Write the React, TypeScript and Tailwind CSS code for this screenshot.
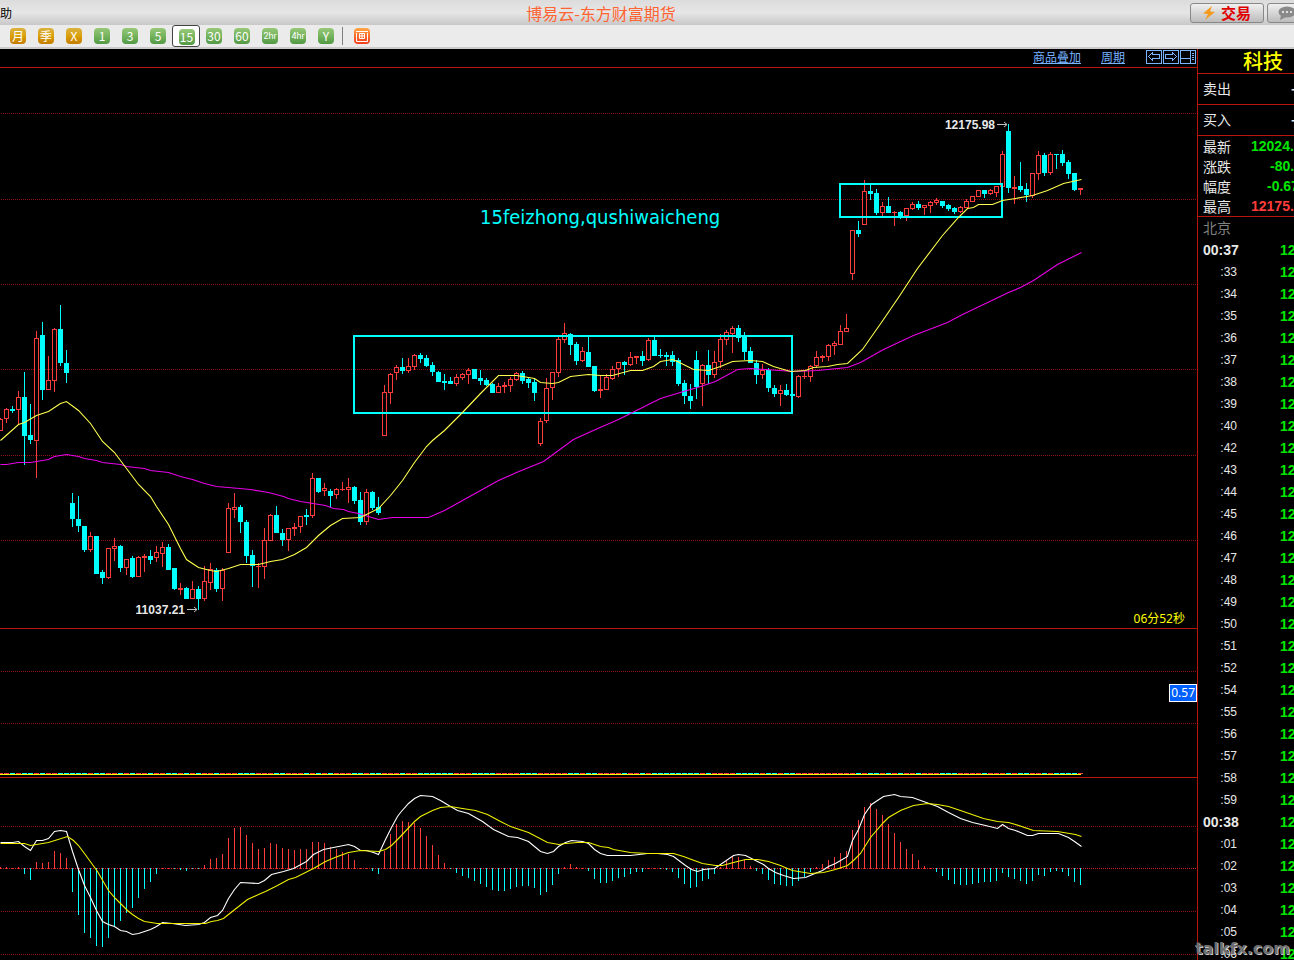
import type { ReactNode } from "react";

// direction (1 = up, 0 = down), high, body top, body bottom, low
type Candle = [number, number, number, number, number];
type Point = [number, number];

const STEP = 6;

const candles: Candle[] = [
  [1, 418, 419, 431, 431], [1, 408, 409, 419, 423], [0, 406, 409, 411, 413], [1, 391, 397, 410, 424],
  [0, 372, 397, 436, 465], [0, 404, 435, 440, 444], [1, 331, 338, 441, 478], [0, 322, 335, 390, 400],
  [1, 356, 380, 390, 390], [1, 328, 329, 381, 392], [0, 305, 329, 363, 366], [0, 350, 363, 373, 383],
  [0, 493, 503, 519, 527], [0, 496, 519, 526, 532], [0, 526, 526, 550, 552], [1, 532, 536, 550, 552],
  [0, 536, 536, 574, 574], [0, 570, 572, 578, 584], [1, 548, 548, 578, 579], [1, 538, 546, 549, 561],
  [0, 545, 546, 568, 572], [1, 559, 559, 568, 575], [0, 556, 558, 577, 578], [1, 556, 557, 577, 577],
  [1, 554, 556, 558, 572], [0, 550, 556, 560, 564], [1, 546, 552, 558, 562], [1, 542, 547, 554, 567],
  [0, 544, 547, 570, 570], [0, 568, 568, 589, 590], [1, 583, 588, 590, 595], [0, 587, 588, 599, 599],
  [1, 581, 589, 599, 599], [0, 586, 589, 599, 610], [1, 566, 581, 599, 601], [1, 563, 569, 583, 590],
  [0, 568, 570, 589, 592], [1, 568, 570, 589, 601], [1, 503, 508, 553, 553], [1, 493, 507, 510, 518],
  [0, 505, 507, 522, 533], [0, 520, 522, 556, 563], [0, 550, 555, 566, 587], [1, 563, 566, 567, 588],
  [1, 528, 540, 567, 579], [1, 514, 515, 541, 541], [0, 506, 515, 533, 533], [0, 529, 533, 540, 546],
  [1, 528, 528, 540, 551], [1, 523, 527, 529, 536], [1, 516, 516, 527, 533], [0, 509, 515, 517, 525],
  [1, 473, 478, 516, 518], [0, 478, 478, 492, 493], [1, 483, 488, 491, 496], [0, 489, 491, 496, 507],
  [1, 488, 489, 495, 499], [1, 482, 489, 490, 491], [1, 478, 487, 490, 503], [0, 486, 487, 501, 504],
  [0, 492, 500, 522, 525], [1, 489, 492, 522, 525], [0, 491, 492, 508, 510], [0, 497, 507, 513, 515],
  [1, 385, 392, 436, 436], [1, 373, 374, 393, 404], [1, 365, 367, 373, 380], [0, 358, 367, 371, 374],
  [1, 358, 366, 371, 373], [1, 354, 355, 367, 370], [0, 353, 355, 359, 363], [0, 355, 358, 366, 367],
  [0, 362, 365, 372, 376], [0, 371, 372, 382, 382], [0, 374, 381, 383, 390], [0, 377, 381, 384, 384],
  [1, 374, 377, 384, 386], [1, 373, 374, 378, 380], [1, 368, 370, 375, 384], [0, 369, 369, 379, 379],
  [0, 370, 378, 381, 385], [0, 378, 380, 385, 386], [0, 383, 384, 393, 393], [1, 383, 386, 393, 393],
  [1, 382, 385, 387, 393], [1, 377, 379, 386, 392], [1, 372, 373, 380, 381], [0, 371, 373, 381, 384],
  [0, 377, 379, 383, 388], [0, 379, 382, 393, 401], [1, 418, 421, 444, 446], [1, 378, 388, 421, 423],
  [1, 372, 372, 388, 400], [1, 337, 339, 373, 377], [1, 323, 333, 340, 343], [0, 333, 334, 345, 355],
  [0, 342, 344, 361, 365], [1, 347, 351, 361, 362], [0, 337, 352, 367, 367], [0, 366, 366, 391, 392],
  [1, 375, 389, 391, 398], [1, 374, 377, 390, 390], [1, 366, 369, 379, 380], [1, 362, 362, 369, 377],
  [0, 361, 362, 365, 375], [1, 352, 357, 365, 366], [1, 356, 356, 358, 364], [0, 351, 356, 361, 366],
  [1, 338, 340, 360, 361], [0, 337, 340, 356, 356], [0, 349, 355, 356, 358], [0, 352, 355, 357, 366],
  [0, 351, 355, 362, 366], [0, 358, 360, 384, 386], [0, 380, 383, 396, 404], [0, 384, 396, 401, 409],
  [0, 351, 360, 387, 399], [1, 364, 365, 384, 406], [0, 350, 365, 375, 384], [1, 351, 362, 375, 378],
  [1, 334, 339, 362, 368], [1, 330, 332, 340, 345], [1, 326, 328, 334, 353], [0, 325, 328, 338, 342],
  [0, 332, 337, 352, 360], [0, 347, 351, 363, 363], [0, 360, 363, 375, 384], [1, 364, 370, 375, 379],
  [0, 368, 370, 388, 392], [0, 385, 388, 394, 397], [1, 385, 390, 394, 406], [0, 384, 390, 395, 396],
  [0, 385, 394, 396, 402], [1, 375, 376, 397, 398], [1, 371, 376, 377, 379], [1, 365, 366, 377, 382],
  [1, 351, 357, 366, 368], [1, 355, 356, 358, 362], [1, 344, 345, 357, 361], [1, 341, 343, 346, 355],
  [1, 325, 331, 345, 345], [1, 314, 328, 332, 332], [1, 230, 230, 274, 280], [0, 221, 230, 234, 237],
  [1, 180, 191, 225, 225], [0, 184, 191, 194, 200], [0, 189, 193, 213, 215], [1, 202, 206, 213, 218],
  [0, 197, 206, 213, 213], [1, 211, 212, 213, 226], [0, 211, 212, 216, 219], [1, 208, 208, 216, 221],
  [1, 202, 204, 209, 210], [0, 201, 204, 208, 210], [1, 205, 205, 208, 215], [1, 201, 202, 206, 213],
  [1, 198, 200, 203, 205], [0, 201, 201, 206, 208], [0, 204, 205, 209, 211], [0, 207, 208, 212, 214],
  [1, 206, 207, 212, 213], [1, 199, 201, 208, 208], [1, 196, 196, 202, 202], [1, 190, 190, 197, 197],
  [0, 190, 190, 194, 198], [1, 189, 190, 194, 195], [1, 186, 186, 193, 197], [1, 151, 154, 187, 189],
  [0, 124, 131, 188, 193], [1, 176, 187, 189, 204], [0, 162, 186, 190, 192], [0, 183, 189, 195, 202],
  [1, 173, 173, 196, 198], [1, 151, 155, 174, 180], [0, 153, 155, 173, 176], [1, 152, 154, 173, 175],
  [0, 154, 154, 155, 169], [0, 150, 154, 163, 166], [0, 160, 162, 174, 179], [0, 173, 173, 190, 191],
  [1, 188, 188, 190, 195],
];

const maFast: Point[] = [
  [0, 440], [18, 424], [24, 422], [36, 415], [48, 411], [60, 403], [66, 401], [78, 410], [90, 423],
  [102, 441], [114, 452], [126, 468], [138, 484], [150, 496], [156, 506], [168, 524], [180, 548],
  [186, 559], [198, 567], [210, 570], [216, 571], [228, 568], [240, 564], [258, 564], [270, 561],
  [282, 559], [294, 554], [306, 547], [318, 535], [330, 525], [342, 518], [360, 517], [372, 511],
  [378, 508], [390, 495], [402, 480], [414, 462], [426, 446], [432, 440], [444, 430], [462, 412],
  [480, 393], [498, 375], [516, 375], [534, 378], [540, 382], [552, 383], [558, 382], [570, 376],
  [588, 374], [600, 375], [612, 375], [630, 370], [642, 370], [653, 366], [660, 361], [672, 359],
  [677, 361], [683, 364], [693, 369], [708, 370], [720, 366], [732, 361], [750, 360], [762, 361],
  [773, 366], [790, 371], [805, 370], [813, 367], [827, 366], [837, 364], [847, 363], [862, 349],
  [883, 319], [900, 294], [917, 268], [942, 235], [958, 217], [967, 208], [973, 207], [978, 204],
  [992, 204], [1002, 200], [1015, 198], [1032, 195], [1047, 190], [1063, 183], [1081, 179],
];

const maSlow: Point[] = [
  [0, 464], [6, 464], [18, 462], [30, 462], [48, 459], [54, 456], [66, 454], [78, 456], [84, 458],
  [96, 460], [102, 462], [120, 464], [126, 466], [144, 468], [150, 470], [168, 472], [180, 476],
  [192, 479], [204, 483], [216, 486], [228, 487], [250, 489], [268, 492], [283, 496], [288, 498],
  [300, 501], [325, 505], [333, 508], [343, 509], [348, 511], [358, 513], [378, 519], [392, 517],
  [428, 517], [444, 510], [462, 500], [480, 490], [498, 480], [516, 472], [543, 461], [573, 439],
  [595, 429], [618, 419], [660, 398], [683, 391], [697, 387], [715, 381], [737, 369], [750, 368],
  [793, 371], [817, 370], [837, 368], [847, 367], [860, 362], [883, 349], [913, 335], [947, 322],
  [960, 315], [1008, 292], [1020, 287], [1033, 280], [1057, 264], [1081, 252],
];

// MACD bars, end of each bar measured against the zero line
const MACD_ZERO = 868;
const macdBars = [
  867, 867, 868, 867, 874, 880, 862, 863, 862, 851, 853, 858, 892, 915, 933, 938, 946, 947, 938, 927,
  921, 913, 908, 898, 889, 882, 874, 868, 868, 869, 870, 871, 869, 869, 865, 859, 858, 854, 838, 828,
  827, 835, 843, 849, 848, 843, 844, 848, 849, 850, 849, 849, 842, 842, 843, 847, 849, 852, 854, 860,
  868, 868, 871, 874, 851, 834, 824, 821, 822, 823, 828, 836, 845, 855, 863, 869, 873, 876, 878, 881,
  884, 887, 890, 891, 891, 889, 887, 886, 886, 888, 895, 892, 885, 874, 867, 864, 867, 868, 871, 879,
  883, 883, 881, 878, 877, 874, 872, 872, 868, 868, 869, 870, 872, 878, 884, 888, 887, 881, 879, 874,
  867, 861, 856, 857, 860, 866, 871, 874, 880, 884, 885, 886, 886, 881, 877, 872, 867, 864, 860, 857,
  853, 851, 830, 820, 807, 803, 809, 815, 824, 833, 842, 849, 854, 860, 866, 868, 872, 876, 880, 884,
  885, 885, 884, 883, 882, 882, 881, 873, 877, 879, 881, 884, 881, 875, 876, 872, 871, 872, 876, 882,
  885,
];

const diff: Point[] = [
  [0, 842], [12, 842], [18, 841], [24, 846], [30, 850], [36, 840], [42, 840], [48, 838], [54, 831],
  [60, 830], [66, 831], [72, 851], [78, 869], [84, 885], [90, 897], [96, 910], [102, 921], [108, 924],
  [114, 926], [120, 930], [126, 931], [132, 934], [138, 933], [150, 929], [156, 926], [162, 922],
  [172, 923], [185, 925], [198, 924], [204, 922], [210, 917], [217, 915], [222, 910], [228, 898],
  [234, 889], [240, 882], [258, 883], [264, 880], [271, 874], [283, 871], [293, 868], [306, 861],
  [313, 854], [323, 849], [348, 844], [354, 846], [360, 850], [366, 850], [373, 852], [378, 854],
  [385, 839], [391, 827], [397, 816], [400, 812], [408, 803], [414, 798], [420, 795], [432, 796],
  [440, 800], [450, 806], [457, 810], [468, 813], [482, 821], [493, 829], [508, 836], [517, 837],
  [528, 841], [534, 846], [540, 851], [547, 853], [553, 851], [558, 846], [565, 842], [571, 840],
  [582, 841], [588, 843], [594, 849], [600, 853], [607, 855], [630, 855], [647, 853], [657, 853],
  [667, 854], [673, 856], [685, 865], [691, 869], [697, 871], [703, 869], [714, 868], [720, 864],
  [733, 855], [738, 854], [745, 855], [753, 859], [763, 864], [768, 868], [775, 872], [783, 875],
  [793, 878], [805, 877], [812, 874], [822, 870], [828, 866], [835, 863], [847, 856], [852, 840],
  [858, 829], [864, 814], [871, 804], [883, 796], [894, 794], [900, 796], [912, 797], [923, 801],
  [937, 806], [948, 812], [960, 818], [972, 822], [985, 825], [997, 828], [1002, 824], [1008, 828],
  [1015, 830], [1027, 835], [1032, 835], [1038, 833], [1058, 833], [1068, 837], [1074, 841], [1081, 846],
];

const dea: Point[] = [
  [0, 843], [24, 843], [30, 845], [48, 842], [67, 836], [73, 840], [78, 845], [84, 853], [97, 871],
  [108, 890], [115, 898], [127, 910], [132, 914], [138, 918], [144, 921], [157, 923], [205, 923],
  [211, 921], [217, 920], [223, 918], [228, 914], [247, 899], [258, 894], [265, 891], [277, 885],
  [288, 879], [295, 877], [307, 871], [313, 868], [325, 861], [337, 856], [348, 852], [360, 850],
  [378, 851], [385, 849], [391, 845], [400, 836], [414, 821], [420, 816], [432, 810], [440, 807],
  [450, 806], [462, 808], [475, 810], [487, 814], [500, 821], [510, 826], [528, 832], [547, 842],
  [553, 843], [558, 844], [565, 843], [577, 842], [588, 842], [600, 846], [608, 847], [613, 849],
  [630, 852], [647, 853], [673, 853], [683, 856], [691, 859], [702, 863], [715, 865], [722, 865],
  [733, 862], [745, 859], [757, 859], [768, 861], [780, 865], [787, 868], [792, 870], [810, 873],
  [823, 872], [835, 869], [847, 865], [853, 860], [860, 853], [870, 837], [883, 822], [888, 817],
  [900, 810], [913, 805], [927, 803], [937, 804], [948, 806], [960, 810], [983, 818], [997, 821],
  [1008, 822], [1015, 824], [1033, 830], [1057, 831], [1075, 834], [1081, 836],
];

const periods = [
  { label: "月", tone: "gold" },
  { label: "季", tone: "gold" },
  { label: "X", tone: "gold" },
  { label: "1", tone: "green" },
  { label: "3", tone: "green" },
  { label: "5", tone: "green" },
  { label: "15", tone: "green" },
  { label: "30", tone: "green" },
  { label: "60", tone: "green" },
  { label: "2hr", tone: "green" },
  { label: "4hr", tone: "green" },
  { label: "Y", tone: "green" },
];

const quotes = [
  { label: "最新", value: "12024.", color: "text-[#00e600]", width: "w-[43px]" },
  { label: "涨跌", value: "-80.", color: "text-[#00e600]", width: "w-6" },
  { label: "幅度", value: "-0.67", color: "text-[#00e600]", width: "w-[27px]" },
  { label: "最高", value: "12175.", color: "text-[#ff3c3c]", width: "w-[43px]" },
];

const ticks = [
  "00:37", ":33", ":34", ":35", ":36", ":37", ":38", ":39", ":40", ":42", ":43", ":44", ":45", ":46",
  ":47", ":48", ":49", ":50", ":51", ":52", ":54", ":55", ":56", ":57", ":58", ":59", "00:38", ":01",
  ":02", ":03", ":04", ":05", ":06",
];

const toPoints = (line: Point[]) => line.map((p) => p.join(",")).join(" ");

function Grid({ y, bright }: { y: number; bright?: boolean }) {
  return (
    <line
      x1="1"
      x2="100%"
      y1={y + 0.5}
      y2={y + 0.5}
      stroke={bright ? "#d02020" : "#8c1010"}
      strokeDasharray="1 1"
      shapeRendering="crispEdges"
    />
  );
}

function Line({ points, color }: { points: Point[]; color: string }) {
  return (
    <polyline
      points={toPoints(points)}
      fill="none"
      stroke={color}
      strokeWidth="1.1"
      transform="translate(0.5 0.5)"
    />
  );
}

function CandleShape({ x, candle }: { x: number; candle: Candle }) {
  const [up, high, top, bottom, low] = candle;
  const color = up ? "#ff3c3c" : "#00ffff";
  return (
    <g>
      <rect x={x} y={high} width="1" height={low - high} fill={color} />
      <rect x={x - 2} y={top} width="5" height={bottom - top} fill={color} />
      {up === 1 && bottom - top > 2 && (
        <rect x={x - 1} y={top + 1} width="3" height={bottom - top - 2} fill="#000" />
      )}
    </g>
  );
}

function PriceLabel({ x, y, text }: { x: number; y: number; text: string }) {
  return (
    <g>
      <text
        x={x - 13}
        y={y + 5}
        textAnchor="end"
        fill="#e8e8e8"
        className="text-[12px] font-bold font-['Liberation_Sans',sans-serif]"
      >
        {text}
      </text>
      <path
        d={`M${x - 11} ${y + 0.5}h10M${x - 4} ${y - 2}l3 2.5l-3 2.5`}
        stroke="#c0c0c0"
        fill="none"
      />
    </g>
  );
}

function PriceChart() {
  return (
    <svg className="block h-[560px] w-full" role="img" aria-label="K线">
      <g transform="translate(0 -68)">
        {[113, 199, 284, 369, 455, 540].map((y) => (
          <Grid key={y} y={y} />
        ))}
        <g shapeRendering="crispEdges">
          {candles.map((c, i) => (
            <CandleShape key={i} x={i * STEP} candle={c} />
          ))}
        </g>
        <g fill="none" stroke="#00ffff" strokeWidth="2">
          <rect x="354" y="336" width="438" height="77" />
          <rect x="840" y="184" width="162" height="33" />
        </g>
        <Line points={maSlow} color="#e800e8" />
        <Line points={maFast} color="#ffff50" />
        <PriceLabel x={1008} y={124} text="12175.98" />
        <PriceLabel x={198} y={609} text="11037.21" />
        <text
          x="480"
          y="224"
          fill="#00ffff"
          className="text-[20px] font-['DejaVu_Sans_Condensed','Noto_Sans',sans-serif]"
        >
          15feizhong,qushiwaicheng
        </text>
      </g>
    </svg>
  );
}

function VolumeChart() {
  return (
    <svg className="block h-[148px] w-full" role="img" aria-label="成交量">
      <g transform="translate(0 -629)" shapeRendering="crispEdges">
        <Grid y={671} />
        <Grid y={723} />
        {candles.map((c, i) => (
          <rect
            key={i}
            x={i * STEP - 2}
            y="773"
            width="5"
            height="1"
            fill={c[0] ? "#ff3c3c" : "#00ffff"}
          />
        ))}
        <rect x="0" y="774" width="1081" height="1" fill="#ffff00" />
      </g>
    </svg>
  );
}

function MacdChart() {
  return (
    <svg className="block h-full w-full" role="img" aria-label="MACD">
      <g transform="translate(0 -778)">
        <Grid y={826} />
        <Grid y={MACD_ZERO} bright />
        <Grid y={911} />
        <Grid y={954} />
        <g shapeRendering="crispEdges">
          {macdBars.map((end, i) => {
            const up = end <= MACD_ZERO;
            return (
              <rect
                key={i}
                x={i * STEP}
                y={up ? end : MACD_ZERO}
                width="1"
                height={up ? MACD_ZERO + 1 - end : end - MACD_ZERO}
                fill={up ? "#ff3c3c" : "#00ffff"}
              />
            );
          })}
        </g>
        <Line points={diff} color="#ffffff" />
        <Line points={dea} color="#f0f000" />
      </g>
    </svg>
  );
}

function Badge({ tone, children }: { tone: string; children: ReactNode }) {
  const colors =
    tone === "gold"
      ? "from-[#d9b23c] via-[#dba008] to-[#c47c00]"
      : tone === "red"
        ? "from-[#ffa848] via-[#fb6a2c] to-[#f03a1c]"
        : "from-[#96c878] via-[#76b45e] to-[#529844]";
  return (
    <span
      className={`flex size-4 items-center justify-center overflow-hidden rounded-sm bg-linear-to-b text-white ${colors}`}
    >
      {children}
    </span>
  );
}

function Header() {
  return (
    <header className="flex h-[25px] shrink-0 items-center justify-between overflow-hidden bg-linear-to-b from-[#dcdcdc] via-[#e6e6e6] to-[#c8c8c8]">
      <button className="w-3 text-[12px] leading-4 text-black">助</button>
      <h1 className="text-[16px] leading-5 text-[#ff6432]">博易云-东方财富期货</h1>
      <div className="flex w-[104px] gap-[3px] overflow-hidden">
        <button className="flex h-[20px] w-[74px] shrink-0 items-center justify-center gap-1.5 rounded-[3px] border border-[#888] bg-linear-to-b from-[#f0f0f0] to-[#bcbcbc] text-[15px] font-bold leading-4 text-[#e00000]">
          <svg width="12" height="14" viewBox="0 0 12 14" aria-hidden="true">
            <path d="M9 0L0 7.500L5 8L2 14L12 6L7 5.500Z" fill="#f59a1c" />
          </svg>
          交易
        </button>
        <button
          aria-label="消息"
          className="flex h-[20px] w-[74px] shrink-0 items-center rounded-[3px] border border-[#888] bg-linear-to-b from-[#f0f0f0] to-[#bcbcbc] pl-2.5"
        >
          <svg width="18" height="14" viewBox="0 0 18 14" aria-hidden="true">
            <ellipse cx="9" cy="6" rx="8.500" ry="5.500" fill="#8a8a8a" />
            <path d="M3 9L2 14L8 11Z" fill="#8a8a8a" />
            <path d="M4 5h2v2h-2zM8 5h2v2h-2zM12 5h2v2h-2z" fill="#e0e0e0" />
          </svg>
        </button>
      </div>
    </header>
  );
}

function Toolbar() {
  return (
    <nav className="flex h-6 shrink-0 border-b-2 border-[#cdc8ca] bg-[#ebebeb] pl-1">
      {periods.map((p) => (
        <button
          key={p.label}
          className={
            p.label === "15"
              ? "flex h-[22px] w-7 items-center justify-center rounded-[3px] border border-[#444] bg-white pt-px pl-px"
              : "flex h-[22px] w-7 items-center justify-center"
          }
        >
          <Badge tone={p.tone}>
            <span
              className={
                p.label.length > 2
                  ? "font-['Roboto',sans-serif] text-[9px] leading-4"
                  : "text-[12px] leading-4"
              }
            >
              {p.label}
            </span>
          </Badge>
        </button>
      ))}
      <span className="ml-0.5 mt-0.5 h-[18px] w-px bg-[#808080]" />
      <button aria-label="画" className="ml-[5px] flex h-[22px] w-7 items-center justify-center">
        <Badge tone="red">
          <svg width="12" height="12" viewBox="0 0 12 12" fill="none" stroke="#fff" aria-hidden="true">
            <path d="M0 1.500h12M0.500 3v8.500h11V3M3.500 3.500h5v5h-5zM6 3.500v5M3.500 6h5" />
          </svg>
        </Badge>
      </button>
    </nav>
  );
}

function ChartMenu() {
  return (
    <div className="flex h-[19px] items-start justify-end border-b border-[#b8160c] pr-px text-[12px] leading-4 text-[#78b4ff]">
      <a href="#overlay" className="underline">
        商品叠加
      </a>
      <a href="#period" className="ml-5 underline">
        周期
      </a>
      <div className="ml-[21px] mt-px flex gap-px">
        <button aria-label="左移">
          <svg className="block" width="16" height="14" fill="none" stroke="currentColor" shapeRendering="crispEdges">
            <path d="M0.500 0.500h15v13h-15zM2.500 6.500l4-4v2h7v4h-7v2z" />
          </svg>
        </button>
        <button aria-label="右移">
          <svg className="block" width="16" height="14" fill="none" stroke="currentColor" shapeRendering="crispEdges">
            <path d="M0.500 0.500h15v13h-15zM13.500 6.500l-4-4v2h-7v4h7v2z" />
          </svg>
        </button>
        <button aria-label="布局">
          <svg className="block" width="16" height="14" fill="none" stroke="currentColor" shapeRendering="crispEdges">
            <path d="M0.500 0.500h15v13h-15zM10.500 0v14M0 8.500h10M12 3.500h2M12 5.500h2M12 7.500h2M12 9.500h2" />
          </svg>
        </button>
      </div>
    </div>
  );
}

function Sidebar() {
  return (
    <aside className="w-[97px] shrink-0 overflow-hidden border-l border-[#b8160c] text-[#e8e8e8]">
      <h2 className="h-[25px] border-b border-[#b8160c] pl-[45px] text-[20px] leading-6 font-medium text-[#ffff00]">
        科技
      </h2>
      {["卖出", "买入"].map((label) => (
        <div
          key={label}
          className="flex h-[31px] justify-between border-b border-[#b8160c] pl-[5px] text-[14px] leading-7"
        >
          {label}
          <span className="w-[3px] overflow-hidden font-bold">-</span>
        </div>
      ))}
      <div className="h-[81px] border-b border-[#b8160c]">
        {quotes.map((q) => (
          <div key={q.label} className="flex h-5 justify-between pl-[5px] text-[14px] leading-5">
            {q.label}
            <span
              className={`overflow-hidden font-['Liberation_Sans',sans-serif] font-bold ${q.width} ${q.color}`}
            >
              {q.value}
            </span>
          </div>
        ))}
      </div>
      <div className="h-[22px] pl-[5px] text-[14px] leading-5 text-[#808080]">北京</div>
      <ul className="font-['Liberation_Sans',sans-serif]">
        {ticks.map((t) => (
          <li key={t} className="flex h-[22px] items-center justify-between pl-[5px]">
            {t.length > 3 ? (
              <b className="text-[14px]">{t}</b>
            ) : (
              <span className="w-[34px] text-right text-[12px]">{t}</span>
            )}
            <span className="w-[14px] overflow-hidden text-[14px] font-bold text-[#00e600]">12</span>
          </li>
        ))}
      </ul>
    </aside>
  );
}

export default function App() {
  return (
    <div className="relative flex h-screen flex-col overflow-hidden bg-black font-['Noto_Sans_CJK_SC',sans-serif]">
      <Header />
      <Toolbar />
      <div className="flex min-h-0 flex-1">
        <main className="flex min-w-0 flex-1 flex-col">
          <ChartMenu />
          <section className="relative shrink-0 border-b border-[#b8160c]">
            <PriceChart />
            <span className="absolute right-3 bottom-0 font-['Noto_Sans','Noto_Sans_CJK_SC',sans-serif] text-[12px] leading-[18px] text-[#ffff00]">
              06分52秒
            </span>
          </section>
          <section className="relative shrink-0 border-b border-[#b8160c]">
            <VolumeChart />
            <span className="absolute top-[55px] right-0 border border-white bg-[#0060ff] px-px font-['Noto_Sans',sans-serif] text-[12px] leading-4 text-white">
              0.57
            </span>
          </section>
          <section className="min-h-0 flex-1 overflow-hidden">
            <MacdChart />
          </section>
        </main>
        <Sidebar />
      </div>
      <span className="absolute right-1 bottom-0 font-['DejaVu_Sans',sans-serif] text-[16px] leading-[22px] font-bold text-[#6e6e6e] [text-shadow:1px_1px_0_#c8c8c8]">
        talkfx.com
      </span>
    </div>
  );
}
